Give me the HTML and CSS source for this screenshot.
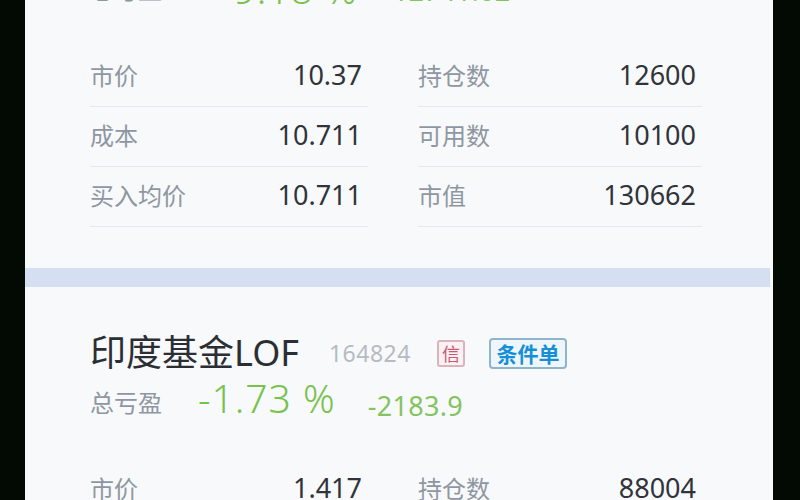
FILE: index.html
```html
<!DOCTYPE html>
<html lang="zh-CN">
<head>
<meta charset="utf-8">
<title>持仓</title>
<link rel="stylesheet" href="styles.css">
</head>
<body>
<div class="screen">
  <section class="card card-top">
    <div class="summary">
      <span class="sum-label">总亏盈</span>
      <span class="sum-pct sum-pct-top">-9.18 %</span>
      <span class="sum-amt sum-amt-top">-12741.62</span>
    </div>
    <div class="grid">
      <div class="cell"><span class="label">市价</span><span class="value">10.37</span></div>
      <div class="cell"><span class="label">持仓数</span><span class="value">12600</span></div>
      <div class="cell"><span class="label">成本</span><span class="value">10.711</span></div>
      <div class="cell"><span class="label">可用数</span><span class="value">10100</span></div>
      <div class="cell"><span class="label">买入均价</span><span class="value">10.711</span></div>
      <div class="cell"><span class="label">市值</span><span class="value">130662</span></div>
    </div>
  </section>
  <div class="band"></div>
  <section class="card">
    <div class="title-row">
      <span class="name">印度基金LOF</span>
      <span class="code">164824</span>
      <span class="tag tag-xin">信</span>
      <span class="tag tag-cond">条件单</span>
    </div>
    <div class="summary">
      <span class="sum-label">总亏盈</span>
      <span class="sum-pct">-1.73 %</span>
      <span class="sum-amt">-2183.9</span>
    </div>
    <div class="grid">
      <div class="cell"><span class="label">市价</span><span class="value">1.417</span></div>
      <div class="cell"><span class="label">持仓数</span><span class="value">88004</span></div>
      <div class="cell"><span class="label">成本</span><span class="value">1.442</span></div>
      <div class="cell"><span class="label">可用数</span><span class="value">88004</span></div>
    </div>
  </section>
</div>
</body>
</html>
```
FILE: styles.css
```css
html, body {
  margin: 0;
  padding: 0;
  background: #020a03;
  height: 500px;
  overflow: hidden;
}
body {
  font-family: "Noto Sans", "Noto Sans CJK SC", sans-serif;
}
.screen {
  margin: 0 27px 0 25px;
  height: 500px;
  overflow: hidden;
  background: #f8f9fb;
}
.card {
  padding: 46px 71px 41px 65px;
}
.card-top {
  padding-top: 0;
  margin-top: -40px;
}
.band {
  height: 19px;
  margin-right: 3px;
  background: #d4e0f2;
}
.title-row {
  height: 40px;
  display: flex;
  align-items: center;
}
.name {
  font-size: 36px;
  color: #2b2f34;
  line-height: 40px;
}
.code {
  margin-left: 30px;
  font-size: 23px;
  color: #b6bbc2;
  letter-spacing: 0.5px;
}
.tag {
  display: flex;
  align-items: center;
  justify-content: center;
  box-sizing: border-box;
  border-radius: 3px;
}
.tag-xin {
  margin-left: 26px;
  width: 28px;
  height: 27px;
  border: 2px solid #d9b3bd;
  background: #fbf1f3;
  color: #c95a74;
  font-size: 18px;
}
.tag-cond {
  margin-left: 24px;
  width: 78px;
  height: 31px;
  border: 2px solid #8fb5cb;
  border-radius: 4px;
  background: #eef6fc;
  color: #178fd6;
  font-size: 21px;
  font-weight: 700;
}
.summary {
  margin-top: 6px;
  height: 44px;
  display: flex;
  align-items: center;
}
.sum-label {
  font-size: 24px;
  color: #8e97a1;
}
.sum-pct {
  margin-left: 36px;
  font-size: 39px;
  font-weight: 300;
  color: #77c24c;
  letter-spacing: 1px;
  padding-bottom: 8px;
}
.sum-pct-top {
  margin-left: 58px;
  padding-bottom: 0;
}
.sum-amt {
  margin-left: 32px;
  font-size: 27px;
  color: #83c460;
  letter-spacing: 0.3px;
  padding-top: 8px;
}
.sum-amt-top {
  margin-left: 26px;
  padding-top: 4px;
}
.grid {
  margin-top: 37px;
  display: grid;
  grid-template-columns: 278px 284px;
  column-gap: 50px;
}
.cell {
  height: 60px;
  box-sizing: border-box;
  padding: 0 6px 4px 0;
  border-bottom: 1px solid #e6e8eb;
  display: flex;
  align-items: center;
  justify-content: space-between;
}
.label {
  font-size: 24px;
  color: #8e97a1;
}
.value {
  font-size: 27px;
  color: #30343a;
}
```
